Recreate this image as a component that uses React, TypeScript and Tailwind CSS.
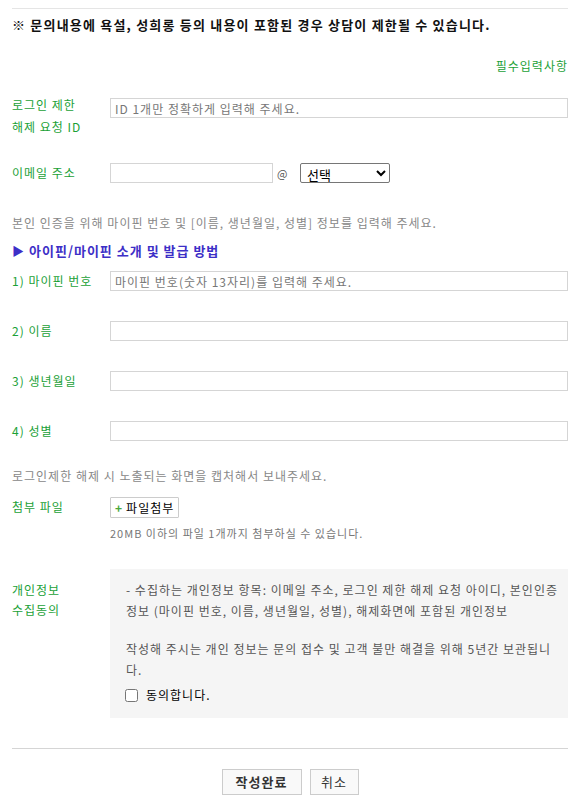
import React from "react";

const font = { fontFamily: '"Noto Sans CJK KR", "Noto Sans", sans-serif' };

function Row({
  label,
  children,
  className = "",
}: {
  label: React.ReactNode;
  children: React.ReactNode;
  className?: string;
}) {
  return (
    <div className={`flex ${className}`}>
      <div className="w-[98px] shrink-0 text-[12px] leading-[19px] text-[#1ba137]">{label}</div>
      <div className="flex-1">{children}</div>
    </div>
  );
}

function TextInput({ placeholder = "" }: { placeholder?: string }) {
  return (
    <input
      type="text"
      placeholder={placeholder}
      className="block h-[20px] w-full border border-[#d5d5d5] bg-white px-[4px] text-[12px] tracking-[1px] text-[#333] placeholder:text-[#777] outline-none"
    />
  );
}

export default function App() {
  return (
    <div
      className="min-h-screen bg-white px-[12px] pt-[8px] pb-[10px] text-[12px] tracking-[1px] text-[#333]"
      style={font}
    >
      <div className="border-t border-[#e5e5e5]" />

      <p className="mt-[6px] text-[13px] font-bold leading-[20px] tracking-[1.2px] text-[#111]">
        ※ 문의내용에 욕설, 성희롱 등의 내용이 포함된 경우 상담이 제한될 수 있습니다.
      </p>

      <p className="mt-[21px] text-right text-[12px] leading-[20px] text-[#1ba137]">필수입력사항</p>

      <Row
        className="mt-[22px]"
        label={
          <div className="-mt-[4px] leading-[22px]">
            로그인 제한
            <br />
            해제 요청 ID
          </div>
        }
      >
        <TextInput placeholder="ID 1개만 정확하게 입력해 주세요." />
      </Row>

      <Row className="mt-[25px]" label="이메일 주소">
        <div className="flex items-center">
          <input
            type="text"
            className="block h-[20px] w-[163px] border border-[#d5d5d5] bg-white px-[4px] text-[12px] outline-none"
          />
          <span className="ml-[4px] w-[23px] text-[11px] text-[#555]">@</span>
          <select className="h-[20px] w-[90px] rounded-[2px] border border-[#767676] bg-white pl-[2px] text-[13px] tracking-normal text-black">
            <option>선택</option>
          </select>
        </div>
      </Row>

      <p className="mt-[30px] leading-[20px] text-[#888]">
        본인 인증을 위해 마이핀 번호 및 [이름, 생년월일, 성별] 정보를 입력해 주세요.
      </p>

      <p className="mt-[8px] flex items-center text-[13px] font-bold leading-[20px] text-[#3d2fc7]">
        <span className="mr-[4px] text-[12px]">▶</span>아이핀/마이핀 소개 및 발급 방법
      </p>

      <Row className="mt-[10px]" label="1) 마이핀 번호">
        <TextInput placeholder="마이핀 번호(숫자 13자리)를 입력해 주세요." />
      </Row>

      <Row className="mt-[30px]" label="2) 이름">
        <TextInput />
      </Row>

      <Row className="mt-[30px]" label="3) 생년월일">
        <TextInput />
      </Row>

      <Row className="mt-[30px]" label="4) 성별">
        <TextInput />
      </Row>

      <p className="mt-[25px] leading-[20px] text-[#888]">로그인제한 해제 시 노출되는 화면을 캡처해서 보내주세요.</p>

      <Row className="mt-[11px]" label="첨부 파일">
        <button className="flex h-[21px] items-center rounded-[1px] border border-[#ccc] bg-white px-[4px] text-[12px] text-black">
          <span className="mr-[3px] text-[12px] font-bold text-[#49a83a]">+</span>파일첨부
        </button>
        <p className="mt-[5px] text-[11px] leading-[20px] text-[#777]">20MB 이하의 파일 1개까지 첨부하실 수 있습니다.</p>
      </Row>

      <Row
        className="mt-[26px]"
        label={
          <div className="pt-[11px] leading-[20px]">
            개인정보
            <br />
            수집동의
          </div>
        }
      >
        <div className="bg-[#f5f5f5] pt-[10px] pr-[6px] pb-[13px] pl-[16px] leading-[21px] text-[#555]">
          <p>
            - 수집하는 개인정보 항목: 이메일 주소, 로그인 제한 해제 요청 아이디, 본인인증 정보 (마이핀 번호, 이름, 생년월일,
            성별), 해제화면에 포함된 개인정보
          </p>
          <p className="mt-[17px]">작성해 주시는 개인 정보는 문의 접수 및 고객 불만 해결을 위해 5년간 보관됩니다.</p>
          <label className="mt-[5px] flex items-center leading-[20px] text-black">
            <input type="checkbox" className="ml-[-1px] mr-[8px] h-[13px] w-[13px]" />
            동의합니다.
          </label>
        </div>
      </Row>

      <div className="mt-[30px] border-t border-[#d5d5d5]" />

      <div className="mt-[20px] flex justify-center gap-[8px]">
        <button className="h-[26px] w-[80px] border border-[#ccc] bg-[#f9f9f9] text-[13px] font-bold tracking-[1px] text-[#333]">
          작성완료
        </button>
        <button className="h-[26px] w-[49px] border border-[#ccc] bg-[#f9f9f9] text-[13px] text-[#333]">취소</button>
      </div>
    </div>
  );
}
